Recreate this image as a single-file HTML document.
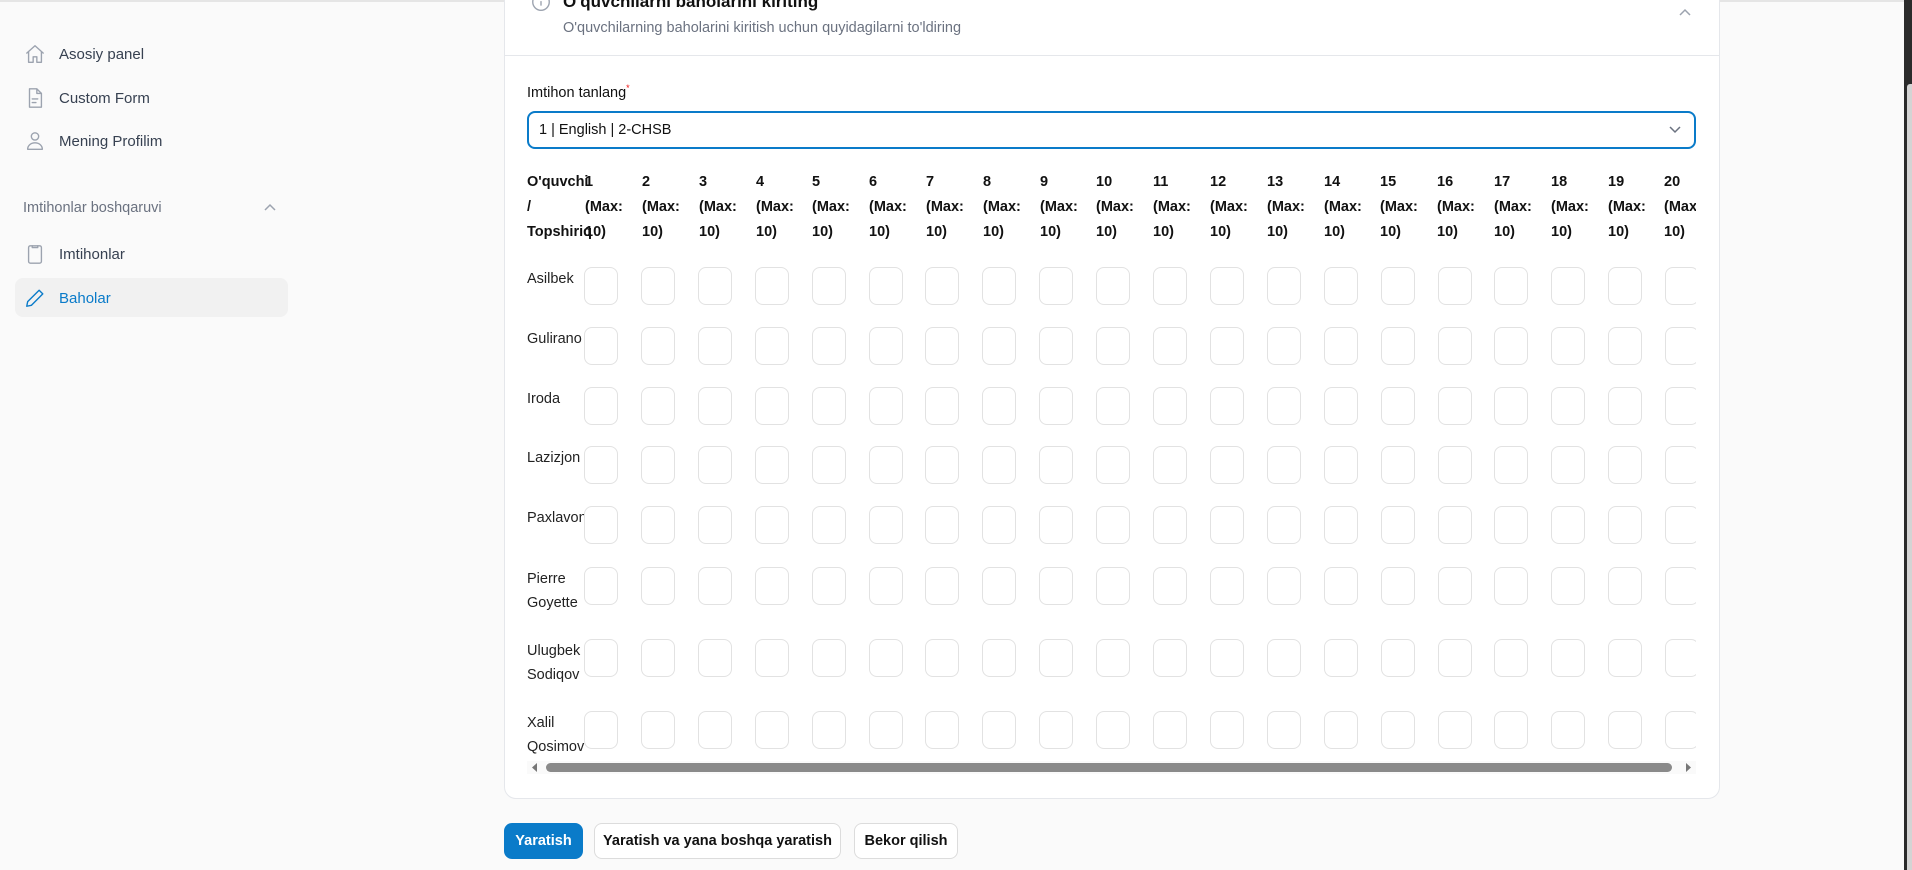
<!DOCTYPE html>
<html><head><meta charset="utf-8"><style>
*{box-sizing:border-box;margin:0;padding:0}
body{width:1912px;height:870px;overflow:hidden;background:#fafafa;font-family:"Liberation Sans",sans-serif;color:#1f2328;position:relative}
.abs{position:absolute}
.nav{position:absolute;left:0;font-size:15px;color:#374151;display:flex;align-items:center;height:20px}
.nav svg{position:absolute;left:24px;width:22px;height:22px;fill:none;stroke:#9ca3af;stroke-width:1.5;stroke-linecap:round;stroke-linejoin:round}
.nav span{position:absolute;left:59px;white-space:nowrap}
.card{position:absolute;left:504px;top:-20px;width:1216px;height:819px;background:#fff;border:1px solid #e5e7eb;border-radius:12px}
.hd{font-weight:bold;font-size:14.5px;position:absolute;line-height:25px;color:#111}
.nm{position:absolute;left:527px;font-size:14.5px;line-height:24px;color:#222}
.box{position:absolute;width:34px;height:38px;border:1px solid #e2e2e2;border-radius:8px;background:#fff}
.btn{position:absolute;top:823px;height:36px;border-radius:8px;font-weight:bold;font-size:14.5px;display:flex;align-items:center;justify-content:center;background:#fff;border:1px solid #dcdcdc;color:#111}
</style></head><body>
<div class="abs" style="left:0;top:0;width:1904px;height:2px;background:#e5e5e5"></div>
<div class="abs" style="left:1904px;top:0;width:8px;height:870px;background:#2b2b2b"></div>
<div class="abs" style="left:1907px;top:84px;width:5px;height:786px;background:#d4d4d4;border-radius:3px 0 0 0"></div>

<div class="nav" style="top:44px"><svg viewBox="0 0 24 24"><path d="M3 11l9-8 9 8M5 9.5V21h5v-6h4v6h5V9.5"/></svg><span>Asosiy panel</span></div>
<div class="nav" style="top:88px"><svg viewBox="0 0 24 24"><path d="M6 2h8l5 5v15H6zM14 2v5h5M9 13h6M9 17h4"/></svg><span>Custom Form</span></div>
<div class="nav" style="top:131px"><svg viewBox="0 0 24 24"><circle cx="12" cy="7" r="4"/><path d="M4 21c0-4 3.5-7 8-7s8 3 8 7z"/></svg><span>Mening Profilim</span></div>
<div class="abs" style="left:23px;top:200px;font-size:14.5px;color:#6b7280">Imtihonlar boshqaruvi</div>
<svg class="abs" style="left:263px;top:203px" width="14" height="10" viewBox="0 0 14 10"><path d="M2 7l5-5 5 5" fill="none" stroke="#9ca3af" stroke-width="1.5"/></svg>
<div class="nav" style="top:244px"><svg viewBox="0 0 24 24"><rect x="5" y="3" width="14" height="19" rx="2"/><path d="M9 3v2h6V3"/></svg><span>Imtihonlar</span></div>
<div class="abs" style="left:15px;top:278px;width:273px;height:39px;background:#f1f1f1;border-radius:8px"></div>
<div class="nav" style="top:288px;color:#0a7bc9"><svg viewBox="0 0 24 24" style="stroke:#0a7bc9"><path d="M16.5 3.5l4 4L8 20l-5 1 1-5z"/></svg><span>Baholar</span></div>

<div class="card"></div>
<svg class="abs" style="left:530px;top:-9px" width="22" height="22" viewBox="0 0 24 24"><circle cx="12" cy="12" r="9" fill="none" stroke="#9ca3af" stroke-width="1.5"/><path d="M12 11v5M12 8v.5" stroke="#9ca3af" stroke-width="1.5"/></svg>
<div class="abs" style="left:563px;top:-8px;font-size:17px;font-weight:bold;color:#111">O'quvchilarni baholarini kiriting</div>
<div class="abs" style="left:563px;top:20px;font-size:14.5px;color:#6b7280">O'quvchilarning baholarini kiritish uchun quyidagilarni to'ldiring</div>
<svg class="abs" style="left:1678px;top:8px" width="14" height="10" viewBox="0 0 14 10"><path d="M2 7l5-5 5 5" fill="none" stroke="#9ca3af" stroke-width="1.5"/></svg>
<div class="abs" style="left:505px;top:55px;width:1214px;height:1px;background:#e5e7eb"></div>
<div class="abs" style="left:527px;top:83px;font-size:14.5px;color:#111">Imtihon tanlang<sup style="color:#e11;font-size:9px">*</sup></div>
<div class="abs" style="left:527px;top:111px;width:1169px;height:38px;border:2px solid #0a7bc9;border-radius:8px;font-size:14.5px;line-height:34px;padding-left:10px;color:#111">1 | English | 2-CHSB</div>
<svg class="abs" style="left:1668px;top:125px" width="14" height="10" viewBox="0 0 14 10"><path d="M2 2l5 5 5-5" fill="none" stroke="#6b7280" stroke-width="1.5"/></svg>

<div class="abs" style="left:527px;top:170px;width:1169px;height:600px;overflow:hidden">
<div style="position:relative;left:-527px;top:-170px" id="t">
<div class="hd" style="left:527px;top:170px">O'quvchi<br>/<br>Topshiriq</div>
<div style="position:absolute;left:0;top:0">
<div class="hd" style="left:585px;top:170px;background:transparent">1<br>(Max:<br>10)</div>
<div class="hd" style="left:642px;top:170px">2<br>(Max:<br>10)</div>
<div class="hd" style="left:699px;top:170px">3<br>(Max:<br>10)</div>
<div class="hd" style="left:756px;top:170px">4<br>(Max:<br>10)</div>
<div class="hd" style="left:812px;top:170px">5<br>(Max:<br>10)</div>
<div class="hd" style="left:869px;top:170px">6<br>(Max:<br>10)</div>
<div class="hd" style="left:926px;top:170px">7<br>(Max:<br>10)</div>
<div class="hd" style="left:983px;top:170px">8<br>(Max:<br>10)</div>
<div class="hd" style="left:1040px;top:170px">9<br>(Max:<br>10)</div>
<div class="hd" style="left:1096px;top:170px">10<br>(Max:<br>10)</div>
<div class="hd" style="left:1153px;top:170px">11<br>(Max:<br>10)</div>
<div class="hd" style="left:1210px;top:170px">12<br>(Max:<br>10)</div>
<div class="hd" style="left:1267px;top:170px">13<br>(Max:<br>10)</div>
<div class="hd" style="left:1324px;top:170px">14<br>(Max:<br>10)</div>
<div class="hd" style="left:1380px;top:170px">15<br>(Max:<br>10)</div>
<div class="hd" style="left:1437px;top:170px">16<br>(Max:<br>10)</div>
<div class="hd" style="left:1494px;top:170px">17<br>(Max:<br>10)</div>
<div class="hd" style="left:1551px;top:170px">18<br>(Max:<br>10)</div>
<div class="hd" style="left:1608px;top:170px">19<br>(Max:<br>10)</div>
<div class="hd" style="left:1664px;top:170px">20<br>(Max:<br>10)</div>
</div>
<div class="nm" style="top:267px">Asilbek</div>
<div class="nm" style="top:327px">Gulirano</div>
<div class="nm" style="top:387px">Iroda</div>
<div class="nm" style="top:446px">Lazizjon</div>
<div class="nm" style="top:506px">Paxlavon</div>
<div class="nm" style="top:567px">Pierre<br>Goyette</div>
<div class="nm" style="top:639px">Ulugbek<br>Sodiqov</div>
<div class="nm" style="top:711px">Xalil<br>Qosimov</div>
<div id="boxes"></div>
</div></div>
<script>
var tops=[267,327,387,446,506,567,639,711],h='';
for(var r=0;r<8;r++)for(var c=0;c<20;c++){h+='<div class="box" style="left:'+(584+c*56.9)+'px;top:'+tops[r]+'px"></div>';}
document.getElementById('boxes').innerHTML=h;
</script>
<div class="abs" style="left:527px;top:761px;width:1169px;height:13px;background:#fafafa"></div>
<div class="abs" style="left:546px;top:763px;width:1126px;height:9px;background:#8a8a8a;border-radius:5px"></div>
<svg class="abs" style="left:531px;top:763px" width="8" height="9"><path d="M6 0v9L1 4.5z" fill="#777"/></svg>
<svg class="abs" style="left:1684px;top:763px" width="8" height="9"><path d="M2 0v9l5-4.5z" fill="#777"/></svg>

<div class="btn" style="left:504px;width:79px;background:#0a7bc9;border-color:#0a7bc9;color:#fff">Yaratish</div>
<div class="btn" style="left:594px;width:247px">Yaratish va yana boshqa yaratish</div>
<div class="btn" style="left:854px;width:104px">Bekor qilish</div>
</body></html>
